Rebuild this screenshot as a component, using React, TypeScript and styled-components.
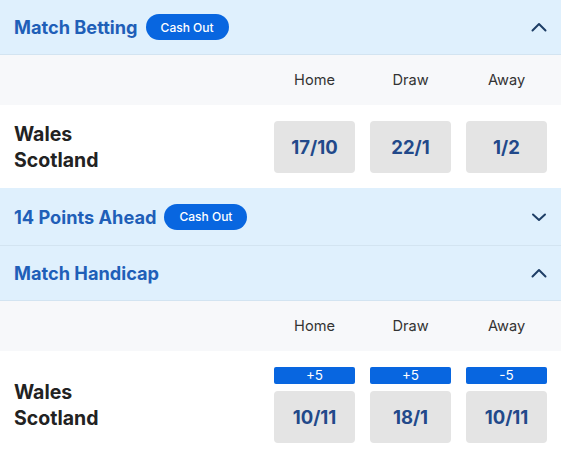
import styled, { createGlobalStyle } from 'styled-components';

const GlobalStyle = createGlobalStyle`
  body {
    margin: 0;
    font-family: Inter, "Noto Sans", "Liberation Sans", sans-serif;
    background: #ffffff;
  }
`;

const Page = styled.div`
  width: 561px;
`;

const MarketHeader = styled.div<{ $tall?: boolean }>`
  display: flex;
  align-items: center;
  gap: 8px;
  height: ${(p) => (p.$tall ? 57 : 54)}px;
  padding: 0 14px;
  background: #dff0fd;
  border-bottom: 1px solid #d3e4f1;
`;

const MarketTitle = styled.h2`
  margin: 0;
  font-size: 18.2px;
  font-weight: 700;
  color: #1f5fb8;
`;

const CashOut = styled.span`
  display: inline-flex;
  align-items: center;
  height: 26px;
  padding: 0 15px;
  border-radius: 13px;
  background: #0866e0;
  color: #ffffff;
  font-size: 12px;
  font-weight: 500;
`;

const Toggle = styled.span`
  margin-left: auto;
  display: flex;
  align-items: center;
`;

const ColumnRow = styled.div`
  display: grid;
  grid-template-columns: 1fr repeat(3, 81px);
  column-gap: 15px;
  align-items: center;
  height: 50px;
  padding: 0 14px;
  background: #f7f8fa;
`;

const ColumnLabel = styled.span`
  text-align: center;
  font-size: 14.6px;
  color: #333333;
`;

const EventRow = styled.div`
  display: grid;
  grid-template-columns: 1fr repeat(3, 81px);
  column-gap: 15px;
  align-items: center;
  padding: 16px 14px 15px;
`;

const Teams = styled.div`
  display: flex;
  flex-direction: column;
  font-size: 19.5px;
  font-weight: 700;
  line-height: 26px;
  color: #222222;
`;

const Selection = styled.div`
  display: flex;
  flex-direction: column;
  gap: 7px;
`;

const Line = styled.span`
  height: 17px;
  border-radius: 2px;
  background: #0866e0;
  color: #ffffff;
  font-size: 13.5px;
  line-height: 17px;
  text-align: center;
`;

const OddsButton = styled.button`
  height: 52px;
  border: 0;
  border-radius: 4px;
  background: #e4e4e4;
  color: #22498a;
  font-family: inherit;
  font-size: 18.5px;
  font-weight: 700;
`;

const Chevron = ({ up }: { up: boolean }) => (
  <svg width="16" height="10" viewBox="0 0 16 10" fill="none">
    <path
      d={up ? 'M1.5 8.5 L8 2 L14.5 8.5' : 'M2 2.5 L8 8 L14 2.5'}
      stroke="#1e3e66"
      strokeWidth="2"
      strokeLinecap="round"
      strokeLinejoin="round"
    />
  </svg>
);

type Pick = { odds: string; line?: string };

const Market = ({ picks }: { picks: Pick[] }) => (
  <>
    <ColumnRow>
      <span />
      <ColumnLabel>Home</ColumnLabel>
      <ColumnLabel>Draw</ColumnLabel>
      <ColumnLabel>Away</ColumnLabel>
    </ColumnRow>
    <EventRow>
      <Teams>
        <span>Wales</span>
        <span>Scotland</span>
      </Teams>
      {picks.map((p, i) => (
        <Selection key={i}>
          {p.line && <Line>{p.line}</Line>}
          <OddsButton>{p.odds}</OddsButton>
        </Selection>
      ))}
    </EventRow>
  </>
);

const App = () => (
  <Page>
    <GlobalStyle />
    <MarketHeader>
      <MarketTitle>Match Betting</MarketTitle>
      <CashOut>Cash Out</CashOut>
      <Toggle>
        <Chevron up />
      </Toggle>
    </MarketHeader>
    <Market picks={[{ odds: '17/10' }, { odds: '22/1' }, { odds: '1/2' }]} />

    <MarketHeader $tall>
      <MarketTitle>14 Points Ahead</MarketTitle>
      <CashOut>Cash Out</CashOut>
      <Toggle>
        <Chevron up={false} />
      </Toggle>
    </MarketHeader>

    <MarketHeader>
      <MarketTitle>Match Handicap</MarketTitle>
      <Toggle>
        <Chevron up />
      </Toggle>
    </MarketHeader>
    <Market
      picks={[
        { odds: '10/11', line: '+5' },
        { odds: '18/1', line: '+5' },
        { odds: '10/11', line: '-5' },
      ]}
    />
  </Page>
);

export default App;
